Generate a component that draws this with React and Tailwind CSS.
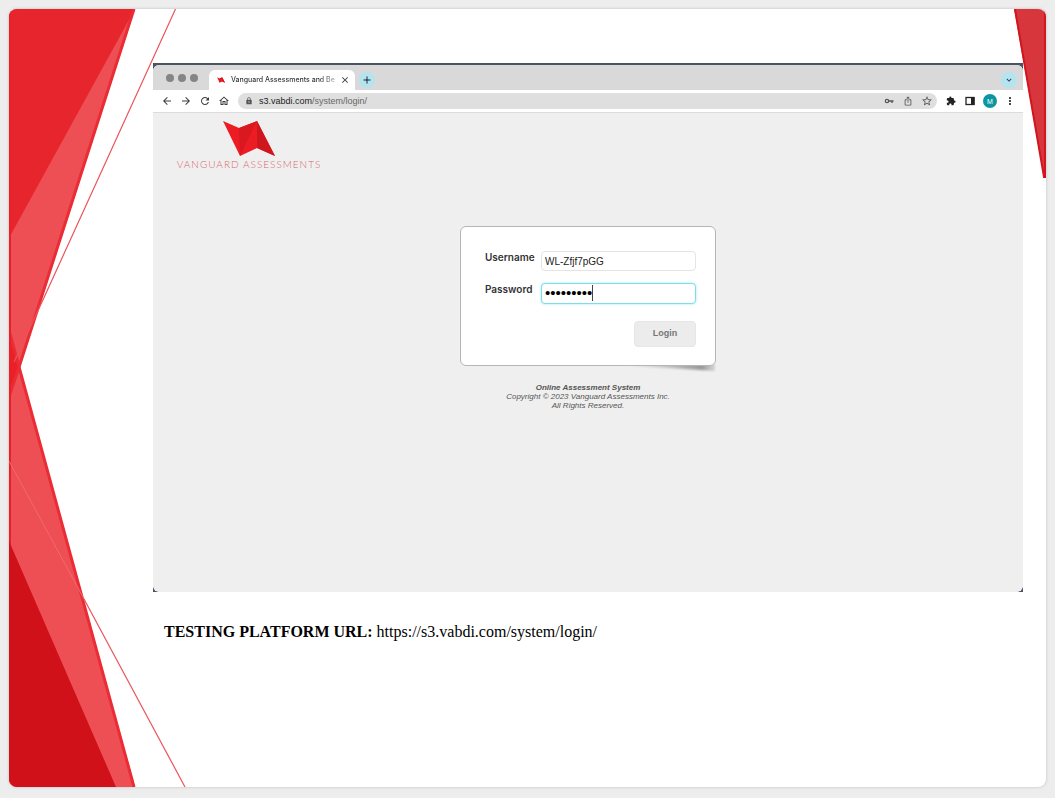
import React from "react";
import {
  MdArrowBack,
  MdArrowForward,
  MdRefresh,
  MdOutlineHome,
  MdLock,
  MdIosShare,
  MdStarBorder,
  MdExtension,
  MdMoreVert,
  MdClose,
  MdAdd,
  MdKeyboardArrowDown,
} from "react-icons/md";

function SlideArt() {
  return (
    <svg
      aria-hidden="true"
      className="absolute inset-0 h-full w-full"
      viewBox="9 9 1037 778"
      preserveAspectRatio="none"
    >
      <polygon points="9,9 135,9 20,367 9,400" fill="#ee4f55" />
      <polygon points="9,332 135,787 9,787" fill="#ee4f55" />
      <polygon points="9,9 135,9 9,238" fill="#e7252d" />
      <polygon points="9,332 20,367 9,396" fill="#ea1f28" />
      <path d="M134 9 L20 364 L10 394" fill="none" stroke="#eb2c34" strokeWidth="3" />
      <path d="M10 334 L134 787" fill="none" stroke="#eb2c34" strokeWidth="3" />
      <path d="M10 9 V787" stroke="#ea1f28" strokeWidth="2" />
      <polygon points="9,541 116,787 9,787" fill="#d01119" />
      <path d="M175.500 9 L42 302 L14 362" fill="none" stroke="#ea545b" strokeWidth="1.200" />
      <path d="M9 461 L84 599" stroke="#ee6a70" strokeWidth="1" />
      <path d="M84 599 L185 787" stroke="#ea545b" strokeWidth="1.200" />
      <polygon points="1014,9 1046,9 1046,177 1044,177" fill="#d7363d" />
      <path d="M1015 9 L1044 177 L1045 177 V9" fill="none" stroke="#d2161f" strokeWidth="2" />
    </svg>
  );
}

function LogoMark({ className }) {
  return (
    <svg aria-hidden="true" className={className} viewBox="0 0 52 35">
      <polygon points="0,0 16,7 34,0 52,35 34,27 17,35" fill="#ec1c25" />
      <polygon points="16,7 34,0 17,35" fill="#da1820" />
      <polygon points="34,0 52,35 34,27" fill="#cf161d" />
    </svg>
  );
}

function TabBar() {
  return (
    <div className="flex h-[25px] items-end bg-[#d9d9d9] pr-1.5">
      <div className="flex h-6 items-center gap-1 pr-[11px] pl-[13px]">
        <span className="h-2 w-2 rounded-full bg-[#858585]" />
        <span className="h-2 w-2 rounded-full bg-[#858585]" />
        <span className="h-2 w-2 rounded-full bg-[#858585]" />
      </div>
      <div className="flex h-5 w-[146px] items-center rounded-t-md bg-white pr-[5px] pl-2">
        <LogoMark className="h-2 w-2 shrink-0" />
        <span className="ml-1.5 bg-linear-to-r from-[#333333] from-85% to-[#bbbbbb] bg-clip-text font-[Inter,sans-serif] text-[7px] leading-3 font-medium whitespace-nowrap text-transparent">
          Vanguard Assessments and Be
        </span>
        <button type="button" aria-label="Close tab" className="ml-auto text-[#333333]">
          <MdClose className="h-2.5 w-2.5" />
        </button>
      </div>
      <button
        type="button"
        aria-label="New tab"
        className="mb-0.5 ml-1 flex h-4 w-4 items-center justify-center rounded-full bg-[#b4e4f0] text-[#222222]"
      >
        <MdAdd className="h-3 w-3" />
      </button>
      <button
        type="button"
        aria-label="Search tabs"
        className="mb-0.5 ml-auto flex h-4 w-4 items-center justify-center rounded-full bg-[#b4e4f0] text-[#333333]"
      >
        <MdKeyboardArrowDown className="h-2.5 w-2.5" />
      </button>
    </div>
  );
}

function IconButton({ label, children }) {
  return (
    <button type="button" aria-label={label} className="flex h-3 w-3 items-center justify-center">
      {children}
    </button>
  );
}

function Toolbar() {
  return (
    <div className="flex h-[23px] items-center border-b border-[#dcdcdc] bg-white pr-[7px] pl-2 text-[#3c3c3c]">
      <div className="flex gap-[7px]">
        <IconButton label="Back"><MdArrowBack className="h-3 w-3" /></IconButton>
        <IconButton label="Forward"><MdArrowForward className="h-3 w-3" /></IconButton>
        <IconButton label="Reload"><MdRefresh className="h-3 w-3" /></IconButton>
        <IconButton label="Home"><MdOutlineHome className="h-3 w-3" /></IconButton>
      </div>
      <div className="ml-2 flex h-4 flex-1 items-center rounded-full bg-[#dfdfdf] pr-1 pl-[7px]">
        <MdLock className="h-2 w-2 text-[#555555]" />
        <span className="ml-1.5 text-[9px] leading-4 text-[#666666]">
          <span className="text-[#222222]">s3.vabdi.com</span>/system/login/
        </span>
        <div className="ml-auto flex gap-[7px] text-[#555555]">
          <IconButton label="Passwords">
            <svg aria-hidden="true" className="h-2.5 w-2.5" viewBox="0 0 10 10" fill="none" stroke="currentColor">
              <circle cx="3" cy="5" r="1.700" strokeWidth="1.200" />
              <path d="M4.700 5 H9.500 M8 5 V7" strokeWidth="1.300" />
            </svg>
          </IconButton>
          <IconButton label="Share"><MdIosShare className="h-2.5 w-2.5" /></IconButton>
          <IconButton label="Bookmark"><MdStarBorder className="h-3 w-3" /></IconButton>
        </div>
      </div>
      <div className="ml-2 flex items-center gap-[7px] text-[#222222]">
        <IconButton label="Extensions"><MdExtension className="h-2.5 w-2.5" /></IconButton>
        <IconButton label="Side panel">
          <svg aria-hidden="true" className="h-2.5 w-2.5" viewBox="0 0 10 10">
            <rect x="1" y="1.500" width="8" height="7" fill="none" stroke="currentColor" strokeWidth="1.300" />
            <rect x="6" y="1" width="3.500" height="8" fill="currentColor" />
          </svg>
        </IconButton>
        <button
          type="button"
          aria-label="Profile"
          className="flex h-3.5 w-3.5 items-center justify-center rounded-full bg-[#0b96a1] text-[7px] leading-none text-white"
        >
          M
        </button>
        <IconButton label="Menu"><MdMoreVert className="h-3 w-3" /></IconButton>
      </div>
    </div>
  );
}

function LoginCard() {
  return (
    <div className="relative w-64">
      <svg aria-hidden="true" className="absolute right-0 -bottom-1.5 h-3 w-32" viewBox="0 0 128 12">
        <defs>
          <linearGradient id="curl" x1="0" x2="1">
            <stop offset="0.300" stopColor="#999999" stopOpacity="0" />
            <stop offset="0.900" stopColor="#999999" />
            <stop offset="1" stopColor="#bbbbbb" stopOpacity="0.500" />
          </linearGradient>
          <filter id="soften" x="-5%" y="-40%" width="110%" height="180%">
            <feGaussianBlur stdDeviation="0.800" />
          </filter>
        </defs>
        <polygon points="0,4 127,4 127,11 80,8" fill="url(#curl)" filter="url(#soften)" />
      </svg>
      <form
        className="relative rounded-md border border-[#b5b5b5] bg-white pt-6 pr-[19px] pb-[18px] pl-6"
        onSubmit={(e) => e.preventDefault()}
      >
        <div className="flex">
          <label htmlFor="username" className="w-14 font-[Inter,sans-serif] text-[10px] leading-3 font-semibold text-[#333333]">
            Username
          </label>
          <input
            id="username"
            type="text"
            defaultValue="WL-Zfjf7pGG"
            className="h-5 min-w-0 flex-1 rounded-sm border border-[#e4e4e4] bg-white px-[3px] text-[10px] text-[#222222] outline-none"
          />
        </div>
        <div className="mt-3 flex">
          <label htmlFor="password" className="w-14 font-[Inter,sans-serif] text-[10px] leading-3 font-semibold text-[#333333]">
            Password
          </label>
          <div className="relative flex min-w-0 flex-1">
            <input
              id="password"
              type="password"
              defaultValue="vanguard1"
              className="h-[21px] w-full rounded-sm border border-[#7edcec] bg-white px-[3px] text-[15px] text-black shadow-[0_0_3px_#a5e6f2] outline-none"
            />
            <span className="absolute top-0.5 left-[51px] h-4 w-px bg-[#444444]" />
          </div>
        </div>
        <div className="mt-[17px] flex justify-end">
          <button
            type="submit"
            className="h-[26px] w-[62px] rounded-sm border border-[#e6e6e6] bg-[#ececec] text-[9px] font-bold text-[#777777]"
          >
            Login
          </button>
        </div>
      </form>
    </div>
  );
}

export default function App() {
  return (
    <div className="flex min-h-screen bg-[#ededed] pt-[9px] pr-[9px] pb-[11px] pl-[9px] font-['Liberation_Sans',Arial,sans-serif]">
      <main className="relative flex-1 overflow-hidden rounded-lg bg-white shadow-[0_0_3px_#bbbbbb]">
        <SlideArt />
        <div className="relative pt-[54px] pr-[23px] pl-36">
          <section aria-label="Browser window" className="bg-[#4a5563]">
            <div className="overflow-hidden rounded-md pt-0.5">
              <div className="overflow-hidden rounded-md bg-[#efefef]">
                <TabBar />
                <Toolbar />
                <div className="flex min-h-[479px] flex-col bg-[#efefef] pt-2">
                  <div className="ml-[26px] flex w-[140px] flex-col items-center">
                    <LogoMark className="h-[35px] w-[52px]" />
                    <span className="font-[Lato,sans-serif] text-[10px] leading-4 font-light tracking-widest whitespace-nowrap text-[#d8656c]">
                      VANGUARD ASSESSMENTS
                    </span>
                  </div>
                  <div className="mt-[54px] flex flex-col items-center">
                    <LoginCard />
                    <p className="mt-[17px] text-center text-[8px] leading-[9px] text-[#555555] italic">
                      <strong>Online Assessment System</strong>
                      <br />
                      Copyright © 2023 Vanguard Assessments Inc.
                      <br />
                      All Rights Reserved.
                    </p>
                  </div>
                </div>
              </div>
            </div>
          </section>
          <p className="mt-[30px] ml-[11px] font-['Liberation_Serif',serif] text-base leading-5 text-black">
            <strong>TESTING PLATFORM URL:</strong>{" "}
            https://s3.vabdi.com/system/login/
          </p>
        </div>
      </main>
    </div>
  );
}
